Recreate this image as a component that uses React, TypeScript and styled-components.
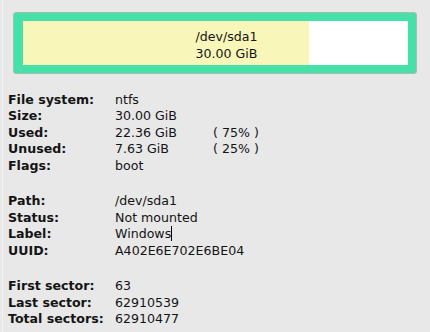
import React from "react";
import styled, { createGlobalStyle } from "styled-components";

const Global = createGlobalStyle`
  html, body { margin: 0; padding: 0; background: #e8e8e8; }
  body { font-family: "DejaVu Sans", "Liberation Sans", sans-serif; font-size: 12.6px; color: #141414; }
`;

const Page = styled.div`
  margin-left: 2px;
  border-left: 1px solid #f3f3f3;
  min-height: 332px;
  box-sizing: border-box;
  padding: 12px 0 0 5px;
`;

const BarFrame = styled.div`
  margin-left: 5px;
  width: 404px;
  height: 62px;
  box-sizing: border-box;
  background: #45e1a8;
  border: 1px solid #a9bdb4;
  border-radius: 3px;
  padding: 8px 8px 8px 9px;
`;

const BarInner = styled.div`
  position: relative;
  display: flex;
  height: 100%;
`;

const Used = styled.div<{ $w: number }>`
  width: ${(p) => p.$w}px;
  background: #f8f7b9;
`;

const Free = styled.div`
  flex: 1;
  background: #ffffff;
`;

const BarText = styled.div`
  position: absolute;
  inset: 0;
  display: flex;
  flex-direction: column;
  align-items: center;
  justify-content: center;
  padding: 3px 0 0 22px;
  line-height: 17px;
  color: #141414;
`;

const Info = styled.div`
  margin-top: 16.75px;
`;

const Section = styled.div`
  display: grid;
  grid-template-columns: 107px 98px auto;
  grid-auto-rows: 16.5px;
  align-items: center;
  & + & { margin-top: 19px; }
`;

const Label = styled.div`
  font-weight: bold;
  white-space: nowrap;
`;

const Value = styled.div<{ $span?: boolean }>`
  white-space: nowrap;
  grid-column: ${(p) => (p.$span ? "2 / 4" : "auto")};
`;

const Caret = styled.span`
  display: inline-block;
  width: 0;
  height: 15px;
  border-left: 1px solid #000;
  vertical-align: -3px;
`;

type Row = { label: string; value: React.ReactNode; extra?: string };

const sections: Row[][] = [
  [
    { label: "File system:", value: "ntfs" },
    { label: "Size:", value: "30.00 GiB" },
    { label: "Used:", value: "22.36 GiB", extra: "( 75% )" },
    { label: "Unused:", value: "7.63 GiB", extra: "( 25% )" },
    { label: "Flags:", value: "boot" },
  ],
  [
    { label: "Path:", value: "/dev/sda1" },
    { label: "Status:", value: "Not mounted" },
    { label: "Label:", value: (<>Windows<Caret /></>) },
    { label: "UUID:", value: "A402E6E702E6BE04" },
  ],
  [
    { label: "First sector:", value: "63" },
    { label: "Last sector:", value: "62910539" },
    { label: "Total sectors:", value: "62910477" },
  ],
];

export default function App() {
  return (
    <>
      <Global />
      <Page>
        <BarFrame>
          <BarInner>
            <Used $w={286} />
            <Free />
            <BarText>
              <div>/dev/sda1</div>
              <div>30.00 GiB</div>
            </BarText>
          </BarInner>
        </BarFrame>
        <Info>
          {sections.map((rows, i) => (
            <Section key={i}>
              {rows.map((r) => (
                <React.Fragment key={r.label}>
                  <Label>{r.label}</Label>
                  <Value $span={!r.extra}>{r.value}</Value>
                  {r.extra && <Value>{r.extra}</Value>}
                </React.Fragment>
              ))}
            </Section>
          ))}
        </Info>
      </Page>
    </>
  );
}
